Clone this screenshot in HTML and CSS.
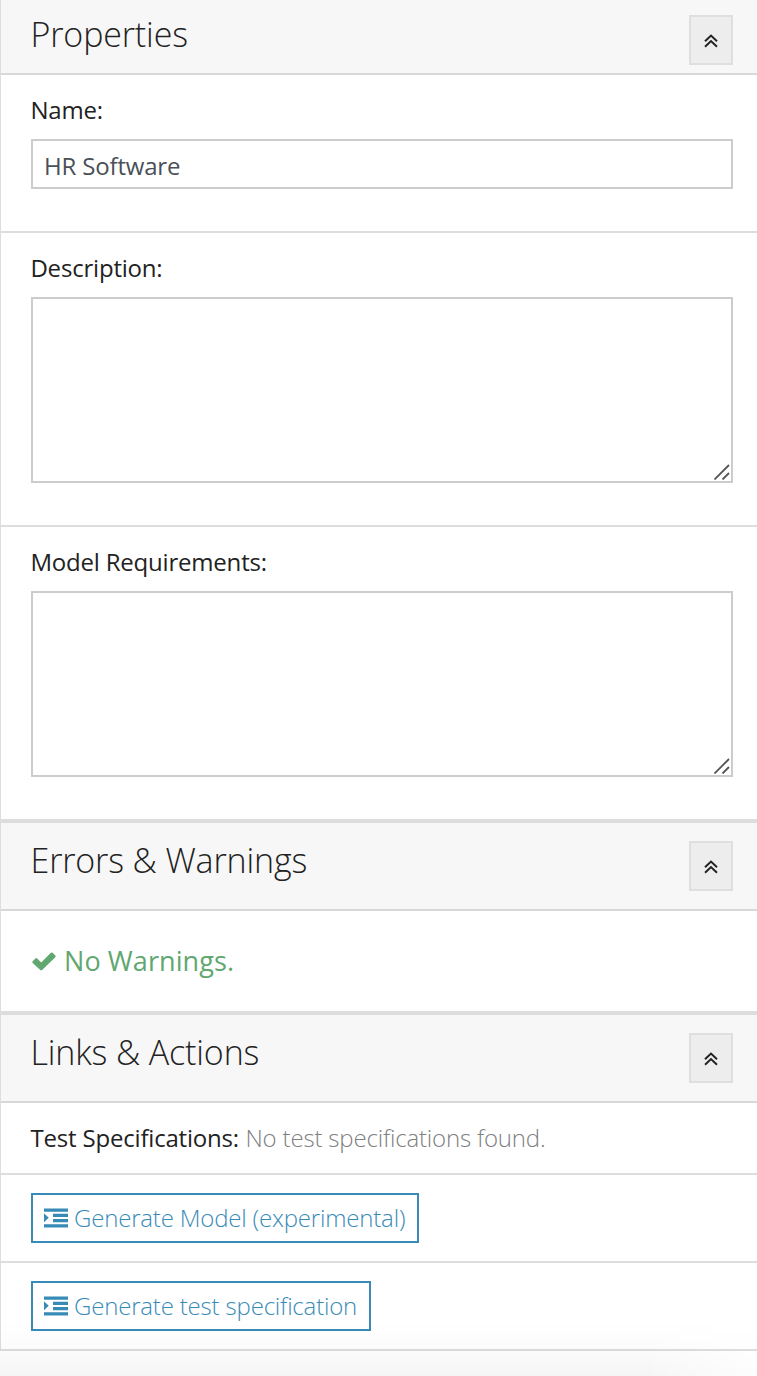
FILE: index.html
```
<!DOCTYPE html>
<html lang="en">
<head>
<meta charset="utf-8">
<title>Properties</title>
<link rel="stylesheet" href="styles.css">
</head>
<body>
<svg class="defs" width="0" height="0">
  <symbol id="chevrons" viewBox="0 0 14 14"><path d="M1 7.2 7 1.6l6 5.6M1 12.7 7 7.1l6 5.6" fill="none" stroke="currentColor" stroke-width="2"/></symbol>
  <symbol id="grip" viewBox="0 0 16 16"><path d="M.5 15.5 15 1M8.5 15.5 15 9" fill="none" stroke="#555" stroke-width="1.8"/></symbol>
  <symbol id="indent" viewBox="0 0 24 20"><path d="M0 .6h24v3.2H0zM9 5.8h15v3.2H9zM9 11h15v3.2H9zM0 16.2h24v3.2H0zM0 5.2v9l4.8-4.5z" fill="currentColor"/></symbol>
</svg>
<main class="panel">
  <header class="head head-first">
    <h2 class="title">Properties</h2>
    <button class="toggle" aria-label="Collapse"><svg class="chev"><use href="#chevrons"/></svg></button>
  </header>
  <section class="field">
    <label class="label" for="name">Name:</label>
    <input class="input" id="name" value="HR Software">
  </section>
  <section class="field">
    <label class="label" for="desc">Description:</label>
    <div class="area-wrap"><textarea class="area" id="desc"></textarea><svg class="grip"><use href="#grip"/></svg></div>
  </section>
  <section class="field field-last">
    <label class="label" for="req">Model Requirements:</label>
    <div class="area-wrap"><textarea class="area" id="req"></textarea><svg class="grip"><use href="#grip"/></svg></div>
  </section>
  <header class="head">
    <h2 class="title">Errors &amp; Warnings</h2>
    <button class="toggle" aria-label="Collapse"><svg class="chev"><use href="#chevrons"/></svg></button>
  </header>
  <section class="status">
    <svg class="check" viewBox="0 0 24 19"><path d="M.7 9.2 3.4 6.4q.9-.8 1.8 0l4 4L18.9.8q.9-.8 1.8 0l2.6 2.6q.8.9 0 1.8L10.1 18.1q-.9.8-1.8 0L.7 11q-.8-.9 0-1.8z" fill="currentColor"/></svg>
    <span class="status-text">No Warnings.</span>
  </section>
  <header class="head">
    <h2 class="title">Links &amp; Actions</h2>
    <button class="toggle" aria-label="Collapse"><svg class="chev"><use href="#chevrons"/></svg></button>
  </header>
  <section class="specs"><span class="specs-label">Test Specifications:</span><span class="specs-none">No test specifications found.</span></section>
  <section class="action"><button class="btn btn-model"><svg class="ind"><use href="#indent"/></svg><span>Generate Model (experimental)</span></button></section>
  <section class="action"><button class="btn btn-spec"><svg class="ind"><use href="#indent"/></svg><span>Generate test specification</span></button></section>
</main>
<div class="shade"></div>
</body>
</html>
```
FILE: styles.css
```
* { box-sizing: border-box; }
html, body { height: 1376px; }
body { margin: 0; background: #fff; color: #222; font: 300 24px/36px "Open Sans", sans-serif; overflow: hidden; position: relative; }
.defs { position: absolute; }
.panel { border-left: 1px solid #ddd; }
.head { display: flex; justify-content: space-between; height: 88px; padding: 18px 24px 0 29.5px; background: #f7f7f7; border-bottom: 2px solid #d8d8d8; }
.head-first { height: 75px; padding-top: 15px; }
.title { margin: -5px 0 0; font-size: 34px; line-height: 48px; font-weight: 300; letter-spacing: -.14px; white-space: nowrap; }
.toggle { display: flex; align-items: center; justify-content: center; width: 44px; height: 50px; padding: 2px 0 0; background: #ededed; border: 2px solid #dfdfdf; color: #222; }
.chev { width: 14px; height: 14px; }
.field { padding: 17px 24px 42px 30px; border-bottom: 2px solid #ddd; }
.field-last { border-bottom-width: 4px; }
.label { display: block; height: 47px; margin-left: -.6px; line-height: 36px; font-weight: 400; letter-spacing: -.2px; }
.input, .area { display: block; width: 100%; border: 2px solid #ccc; border-radius: 0; background: #fff; color: #495057; font: 400 24px/36px "Open Sans", sans-serif; letter-spacing: -.17px; outline: 0; }
.input { height: 50px; padding: 2px 11px 0; }
.area { height: 186px; padding: 6px 11px; resize: none; }
.area-wrap { position: relative; }
.grip { position: absolute; right: 3px; bottom: 3px; width: 16px; height: 16px; }
.status { display: flex; align-items: center; gap: 8px; height: 104px; padding: 0 31px; border-bottom: 4px solid #ddd; color: #60a770; font-size: 27px; font-weight: 400; letter-spacing: .08px; }
.check { width: 24px; height: 19px; }
.specs { display: flex; gap: 6.5px; height: 72px; padding-left: 29.5px; border-bottom: 2px solid #ddd; line-height: 70px; letter-spacing: -.19px; white-space: nowrap; }
.specs-label { font-weight: 500; }
.specs-none { color: #808080; letter-spacing: -.18px; }
.action { height: 88px; padding: 18px 30px; border-bottom: 2px solid #ddd; }
.btn { display: flex; align-items: center; gap: 6px; height: 50px; padding: 0 11px; border: 2px solid #398bb7; background: transparent; color: #398bb7; font: 300 24px/46px "Open Sans", sans-serif; letter-spacing: -.18px; white-space: nowrap; }
.btn-model { width: 388px; }
.btn-spec { width: 340px; }
.ind { width: 24px; height: 20px; flex: none; }
.shade { position: absolute; left: 0; right: 0; bottom: 0; height: 56px; background: linear-gradient(to bottom, transparent, rgba(0,0,0,.01) 45%, rgba(0,0,0,.04)); -webkit-mask-image: linear-gradient(to right, #000 85%, rgba(0,0,0,.2)); mask-image: linear-gradient(to right, #000 85%, rgba(0,0,0,.2)); pointer-events: none; }
```
